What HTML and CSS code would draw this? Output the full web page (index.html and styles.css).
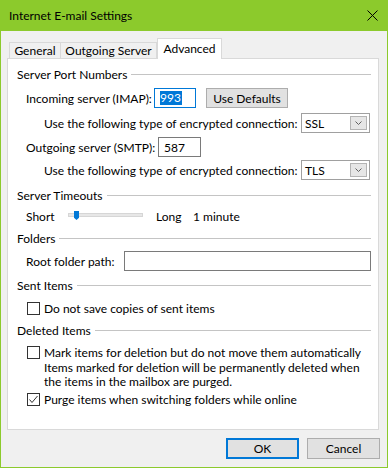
FILE: index.html
```html
<!DOCTYPE html>
<html>
<head>
<meta charset="utf-8">
<link rel="stylesheet" href="styles.css">
</head>
<body>
<div class="window">
  <div class="titlebar">
    <span class="title">Internet E-mail Settings</span>
    <svg class="close" width="11" height="11" viewBox="0 0 11 11"><path d="M0.5 0.5 L10.5 10.5 M10.5 0.5 L0.5 10.5" stroke="#000" stroke-width="1" fill="none"/></svg>
  </div>
  <div class="body">
    <div class="tabs">
      <div class="tab tab-general">General</div>
      <div class="tab tab-outgoing">Outgoing Server</div>
      <div class="tab tab-advanced">Advanced</div>
    </div>
    <div class="panel">
      <div class="group-h">Server Port Numbers</div>
      <div class="row ind1 mt6">
        <span class="lbl w-imap">Incoming server (IMAP):</span>
        <span class="textbox focus w-port1"><span class="sel">993</span></span>
        <span class="pushbtn">Use Defaults</span>
      </div>
      <div class="row ind2 mt5">
        <span class="lbl w-enc">Use the following type of encrypted connection:</span>
        <span class="combo">SSL<span class="arrow"><svg width="7" height="4" viewBox="0 0 7 4"><path d="M0.5 0.5 L3.5 3.5 L6.5 0.5" stroke="#606060" fill="none"/></svg></span></span>
      </div>
      <div class="row ind1 mt4">
        <span class="lbl w-smtp">Outgoing server (SMTP):</span>
        <span class="textbox w-port2">587</span>
      </div>
      <div class="row ind2 mt3">
        <span class="lbl w-enc">Use the following type of encrypted connection:</span>
        <span class="combo">TLS<span class="arrow"><svg width="7" height="4" viewBox="0 0 7 4"><path d="M0.5 0.5 L3.5 3.5 L6.5 0.5" stroke="#606060" fill="none"/></svg></span></span>
      </div>

      <div class="group-h mt7">Server Timeouts</div>
      <div class="row ind1 mt3">
        <span class="lbl w-short">Short</span>
        <span class="slider"><span class="track"></span><span class="thumb"></span></span>
        <span class="lbl w-long">Long</span>
        <span class="lbl">1 minute</span>
      </div>

      <div class="group-h mt4">Folders</div>
      <div class="row ind1 mt5">
        <span class="lbl w-root">Root folder path:</span>
        <span class="textbox w-rootbox"></span>
      </div>

      <div class="group-h mt6">Sent Items</div>
      <div class="row indcb mt5">
        <span class="checkbox"></span>
        <span class="cblabel">Do not save copies of sent items</span>
      </div>

      <div class="group-h mt4">Deleted Items</div>
      <div class="row indcb mt4">
        <span class="checkbox"></span>
        <span class="cblabel">Mark items for deletion but do not move them automatically</span>
      </div>
      <div class="note ind2">Items marked for deletion will be permanently deleted when<br>the items in the mailbox are purged.</div>
      <div class="row indcb">
        <span class="checkbox"><svg width="11" height="11" viewBox="0 0 11 11"><path d="M1.5 5.5 L4 8.5 L9.5 2" stroke="#333" stroke-width="1" fill="none"/></svg></span>
        <span class="cblabel">Purge items when switching folders while online</span>
      </div>
    </div>
    <div class="buttons">
      <button class="btn btn-default">OK</button>
      <button class="btn">Cancel</button>
    </div>
  </div>
</div>
</body>
</html>
```
FILE: styles.css
```css
* { box-sizing: border-box; }
html, body { margin: 0; padding: 0; }
body {
  font-family: Lato, "Noto Sans", sans-serif;
  font-size: 12px;
  color: #000;
  background: #f0f0f0;
}
.window {
  width: 388px;
  height: 468px;
  border: 1px solid #8cca2c;
  border-top: none;
  background: #f0f0f0;
  display: flex;
  flex-direction: column;
}
.titlebar {
  height: 31px;
  flex: none;
  background: #8cca2c;
  display: flex;
  align-items: center;
  padding: 0 9px 0 8px;
}
.title { flex: 1; white-space: nowrap; }
.close { display: block; }

.body { padding: 0 8px 0 6px; }

.tabs {
  display: flex;
  align-items: flex-end;
  height: 20px;
  margin: 7px 0 0 2px;
}
.tab {
  height: 16px;
  border: 1px solid #d9d9d9;
  border-bottom: none;
  background: #f0f0f0;
  display: flex;
  align-items: center;
  justify-content: center;
  white-space: nowrap;
}
.tab-general { width: 52px; }
.tab-outgoing { width: 96px; border-left: none; }
.tab-advanced {
  width: 65px;
  height: 21px;
  margin-bottom: -1px;
  background: #fff;
  position: relative;
  z-index: 1;
  padding-bottom: 1px;
}

.panel {
  height: 372px;
  background: #fff;
  border: 1px solid #d9d9d9;
  padding: 7px 7px 0 9px;
}

.group-h {
  display: flex;
  align-items: center;
  height: 16px;
  white-space: nowrap;
}
.group-h::after {
  content: "";
  flex: 1;
  height: 1px;
  background: #c4c4c4;
  margin-left: 4px;
}

.row {
  display: flex;
  align-items: center;
  height: 20px;
  white-space: nowrap;
}
.ind1 { padding-left: 9px; }
.ind2 { padding-left: 27px; }
.indcb { padding-left: 10px; }

.mt3 { margin-top: 3px; }
.mt4 { margin-top: 4px; }
.mt5 { margin-top: 5px; }
.mt6 { margin-top: 6px; }
.mt7 { margin-top: 7px; }

.lbl { flex: none; }
.w-imap { width: 128px; }
.w-smtp { width: 132px; }
.w-enc { width: 257px; }
.w-short { width: 42px; }
.w-long { width: 37px; margin-left: 13px; }
.w-root { width: 98px; }

.textbox {
  height: 20px;
  border: 1px solid #7a7a7a;
  background: #fff;
  display: flex;
  align-items: center;
  padding-left: 4px;
  flex: none;
}
.textbox.focus { border-color: #0078d7; }
.w-port1 { width: 42px; padding-left: 5px; }
.w-port2 { width: 43px; padding-left: 5px; }
.w-rootbox { width: 247px; }
.sel {
  background: #0078d7;
  color: #fff;
  line-height: 14px;
  padding: 0 1px 0 0;
}

.pushbtn {
  width: 82px;
  height: 20px;
  margin-left: 10px;
  border: 1px solid #adadad;
  background: #e1e1e1;
  display: flex;
  align-items: center;
  justify-content: center;
}

.combo {
  width: 69px;
  height: 20px;
  border: 1px solid #a0a0a0;
  background: #fff;
  display: flex;
  align-items: center;
  justify-content: space-between;
  padding: 0 2px 0 3px;
}
.arrow {
  width: 17px;
  height: 14px;
  background: #e6e6e6;
  border: 1px solid #b4b4b4;
  display: flex;
  align-items: center;
  justify-content: center;
}
.arrow svg { display: block; }

.slider {
  position: relative;
  width: 75px;
  height: 20px;
  flex: none;
}
.track {
  display: block;
  margin-top: 7px;
  height: 4px;
  background: #e7e7e7;
  border: 1px solid #d6d6d6;
}
.thumb {
  position: absolute;
  left: 6px;
  top: 5px;
  width: 5px;
  height: 9px;
  background: #0078d7;
  clip-path: polygon(0 0, 100% 0, 100% 75%, 50% 100%, 0 75%);
}

.checkbox {
  width: 13px;
  height: 13px;
  border: 1px solid #333;
  background: #fff;
  flex: none;
  display: flex;
  align-items: center;
  justify-content: center;
}
.checkbox svg { display: block; }
.cblabel { margin-left: 4px; }

.note {
  margin-top: -1px;
  line-height: 14px;
  white-space: nowrap;
}

.buttons {
  display: flex;
  justify-content: flex-end;
  gap: 8px;
  margin: 8px -1px 0 0;
}
.btn {
  width: 73px;
  height: 21px;
  border: 1px solid #adadad;
  background: #e1e1e1;
  font: inherit;
  color: #000;
  padding: 0;
}
.btn-default { border: 2px solid #0078d7; }
```
